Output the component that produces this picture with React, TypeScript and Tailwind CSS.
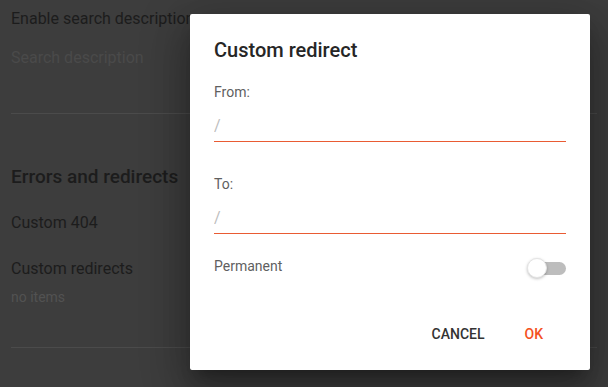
import React, { useState } from 'react'

const font = { fontFamily: 'Roboto, "Liberation Sans", sans-serif' }

const Field: React.FC<{ label: string; className?: string }> = ({ label, className = '' }) => (
  <div className={className}>
    <div className="h-[20px] text-[14px] leading-[20px] text-[#5f5f5f]">{label}</div>
    <div className="pt-3 pb-[3px] border-b border-[#e95b33]">
      <input
        placeholder="/"
        className="block w-full h-[24px] text-[16px] leading-[24px] text-[#333] placeholder:text-[#bdbdbd] outline-none bg-transparent"
        style={font}
      />
    </div>
  </div>
)

const App: React.FC = () => {
  const [permanent, setPermanent] = useState(false)

  return (
    <div className="relative w-[608px] h-[387px] overflow-hidden bg-[#3d3d3d]" style={font}>
      {/* Page behind the backdrop */}
      <div className="px-[11px]">
        <div className="pt-[7px] h-[24px] box-content text-[16px] leading-[24px] text-[#1c1c1c]">
          Enable search description
        </div>
        <div className="mt-[15px] text-[16px] leading-[24px] text-[#4a4a4a]">Search description</div>
        <div className="mt-[43px] border-t border-[#4b4b4b]" />
        <div className="mt-[51px] text-[19px] leading-[24px] font-medium text-[#1c1c1c]">Errors and redirects</div>
        <div className="mt-[22px] text-[16px] leading-[24px] text-[#1c1c1c]">Custom 404</div>
        <div className="mt-[22px] text-[16px] leading-[24px] text-[#1c1c1c]">Custom redirects</div>
        <div className="mt-[6px] text-[14px] leading-[20px] text-[#525252]">no items</div>
        <div className="mt-[40px] border-t border-[#4b4b4b]" />
      </div>

      {/* Dialog */}
      <div className="absolute left-[190px] top-[14px] w-[400px] h-[356px] bg-white rounded-[2px] shadow-[0_11px_15px_-7px_rgba(0,0,0,0.3),0_24px_38px_3px_rgba(0,0,0,0.2),0_9px_46px_8px_rgba(0,0,0,0.18)] flex flex-col">
        <div className="px-6 pt-6">
          <div className="h-[24px] text-[20px] leading-[24px] font-medium text-[#262626]">Custom redirect</div>
          <Field label="From:" className="mt-5" />
          <Field label="To:" className="mt-8" />
          <div className="mt-5 h-[24px] flex items-center justify-between">
            <span className="text-[14px] leading-[20px] text-[#5f5f5f]">Permanent</span>
            <button
              onClick={() => setPermanent(!permanent)}
              className="relative mt-[4px] w-[39px] h-[20px] flex items-center"
            >
              <span className={`absolute right-0 w-[34px] h-[13px] rounded-full ${permanent ? 'bg-[#f4a58c]' : 'bg-[#bdbdbd]'}`} />
              <span
                className={`absolute top-0 w-[20px] h-[20px] rounded-full border border-[#e4e4e4] shadow-[0_1px_3px_rgba(0,0,0,0.25)] ${
                  permanent ? 'left-[19px] bg-[#e95b33]' : 'left-0 bg-white'
                }`}
              />
            </button>
          </div>
        </div>
        <div className="mt-[38px] flex justify-end gap-2 pr-[31px]">
          <button className="h-[36px] px-4 text-[14px] leading-[36px] font-medium uppercase text-[#333]">Cancel</button>
          <button className="h-[36px] px-4 text-[14px] leading-[36px] font-medium uppercase text-[#f4511e]">OK</button>
        </div>
      </div>
    </div>
  )
}

export default App
